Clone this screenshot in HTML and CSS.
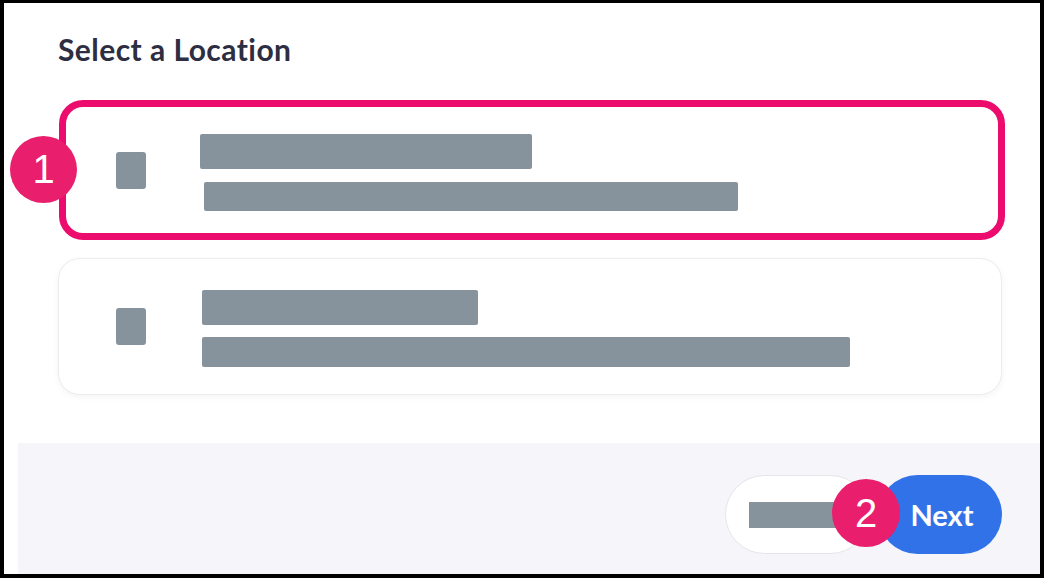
FILE: index.html
```html
<!DOCTYPE html>
<html>
<head>
<meta charset="utf-8">
<link rel="stylesheet" href="styles.css">
</head>
<body>
<div class="frame">
  <div class="content">
    <h1 class="title">Select a Location</h1>
    <div class="card card-selected">
      <div class="thumb"></div>
      <div class="lines">
        <div class="bar bar-lg" style="width:332px"></div>
        <div class="bar bar-sm shift" style="width:534px"></div>
      </div>
    </div>
    <div class="card card-plain">
      <div class="thumb"></div>
      <div class="lines">
        <div class="bar bar-lg" style="width:276px"></div>
        <div class="bar bar-sm" style="width:648px"></div>
      </div>
    </div>
    <div class="badge badge-one">1</div>
  </div>
  <div class="footer">
    <button class="btn btn-secondary"><span class="btn-bar"></span></button>
    <button class="btn btn-primary">Next</button>
    <div class="badge badge-two">2</div>
  </div>
</div>
</body>
</html>
```

FILE: styles.css
```css
* { box-sizing: border-box; }
html, body { margin: 0; padding: 0; }
body {
  width: 1044px;
  height: 578px;
  font-family: Lato, "Noto Sans", sans-serif;
  background: #000;
}
.frame {
  width: 1044px;
  height: 578px;
  border-style: solid;
  border-color: #000;
  border-width: 3px 4px 4px 4px;
  background: #fff;
  display: flex;
  flex-direction: column;
}
.content {
  position: relative;
  height: 440px;
  padding: 0 0 0 54px;
}
.title {
  margin: 0;
  padding-top: 28px;
  font-size: 30px;
  line-height: 36px;
  font-weight: 700;
  color: #2e2e42;
  letter-spacing: 0.45px;
}
.card {
  display: flex;
  align-items: center;
  background: #fff;
  border-radius: 24px;
  width: 946px;
}
.card-selected {
  margin-top: 33px;
  margin-left: 1px;
  height: 140px;
  border: 7px solid #ec0c6e;
  padding: 0 0 0 50px;
}
.card-plain {
  margin-top: 18px;
  width: 944px;
  height: 137px;
  border: 1px solid #ececf0;
  border-radius: 22px;
  box-shadow: 0 2px 6px rgba(30, 30, 60, 0.05);
  padding: 0 0 0 57px;
}
.thumb {
  width: 30px;
  height: 37px;
  border-radius: 3px;
  background: #87939c;
  flex: none;
}
.lines {
  display: flex;
  flex-direction: column;
  gap: 12px;
  margin-left: 56px;
}
.card-selected .lines { margin-left: 54px; gap: 13px; margin-top: 4px; }
.card-plain .lines { margin-top: 4px; }
.bar {
  background: #87939c;
  border-radius: 2px;
}
.bar-lg { height: 35px; }
.bar-sm { height: 30px; }
.card-selected .bar-sm { height: 29px; }
.shift { margin-left: 4px; }

.badge {
  position: absolute;
  width: 67px;
  height: 67px;
  border-radius: 50%;
  background: #e91e6c;
  color: #fff;
  font-family: "Liberation Sans", Arial, sans-serif;
  font-size: 40px;
  line-height: 67px;
  text-align: center;
}
.badge-one { left: 6px; top: 133px; }
.badge-two { left: 814px; top: 36px; width: 68px; height: 68px; line-height: 68px; }

.footer {
  position: relative;
  flex: 1;
  margin-left: 14px;
  background: #f6f6fa;
  display: flex;
  justify-content: flex-end;
  align-items: flex-start;
  gap: 8px;
  padding: 32px 38px 0 0;
}
.btn {
  height: 79px;
  border-radius: 40px;
  border: none;
  font-family: Lato, "Noto Sans", sans-serif;
  padding: 0;
  margin: 0;
}
.btn-secondary {
  width: 145px;
  background: #fff;
  border: 1px solid #e4e4ea;
  display: flex;
  align-items: center;
  padding-left: 23px;
}
.btn-bar {
  display: block;
  width: 92px;
  height: 26px;
  background: #87939c;
}
.btn-primary {
  width: 124px;
  background: #3272e8;
  color: #fff;
  font-size: 29px;
  font-weight: 700;
  padding-left: 4px;
}
```
